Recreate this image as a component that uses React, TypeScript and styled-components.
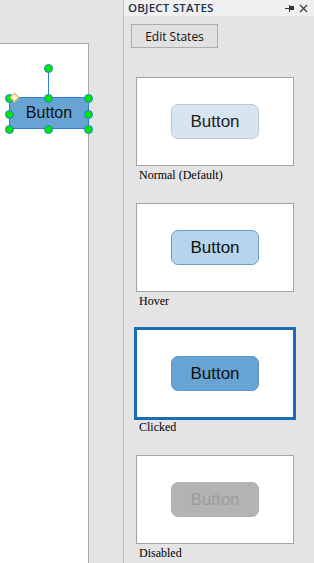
import React from "react";
import styled, { createGlobalStyle } from "styled-components";

const Global = createGlobalStyle`
  html, body { margin: 0; padding: 0; background: #e4e4e4; }
  body { width: 314px; height: 563px; overflow: hidden; font-family: "Liberation Sans", Arial, sans-serif; }
`;

const Root = styled.div`
  display: flex;
  width: 314px;
  height: 563px;
  background: #e4e4e4;
`;

const Workspace = styled.div`
  width: 124px;
  flex: none;
  padding-top: 43px;
  box-sizing: border-box;
  border-right: 1px solid #bdbdbd;
  display: flex;
`;

const Canvas = styled.div`
  position: relative;
  width: 89px;
  height: 100%;
  box-sizing: border-box;
  background: #fff;
  border-top: 1px solid #a9a9a9;
  border-right: 1px solid #a9a9a9;
`;

const Widget = styled.div`
  position: absolute;
  left: 9px;
  top: 53px;
  width: 80px;
  height: 32px;
  box-sizing: border-box;
  background: #67a4d4;
  border: 1px solid #2c80df;
  display: flex;
  align-items: center;
  justify-content: center;
  font-family: "Liberation Sans", Arial, sans-serif;
  font-size: 16px;
  color: #111;
`;

const RotateLine = styled.div`
  position: absolute;
  left: 48px;
  top: 24px;
  width: 1px;
  height: 30px;
  background: #2c80df;
`;

const Handle = styled.div<{ $x: number; $y: number }>`
  position: absolute;
  left: ${(p) => p.$x - 4.5}px;
  top: ${(p) => p.$y - 4.5}px;
  width: 9px;
  height: 9px;
  box-sizing: border-box;
  border-radius: 50%;
  background: #00e60a;
  border: 1px solid #2a7fd6;
`;

const Diamond = styled.div`
  position: absolute;
  left: 11px;
  top: 50px;
  width: 7px;
  height: 7px;
  box-sizing: border-box;
  background: #fff4cc;
  border: 1px solid #d0b46a;
  transform: rotate(45deg);
`;

const Panel = styled.div`
  flex: 1;
  display: flex;
  flex-direction: column;
  background: #e4e4e4;
`;

const Header = styled.div`
  height: 16px;
  background: #f0f0f0;
  display: flex;
  align-items: center;
  padding: 0 4px 0 4px;
  box-sizing: border-box;
`;

const Title = styled.div`
  flex: 1;
  font-family: "Open Sans", "Liberation Sans", sans-serif;
  font-weight: 600;
  font-size: 11.5px;
  letter-spacing: 0.2px;
  color: #1e2f4a;
  line-height: 16px;
`;

const HeaderIcons = styled.div`
  display: flex;
  align-items: center;
  gap: 4px;
  margin-right: 2px;
`;

const Toolbar = styled.div`
  padding: 8px 0 0 7px;
`;

const EditButton = styled.button`
  width: 87px;
  height: 24px;
  box-sizing: border-box;
  background: #e1e1e1;
  border: 1px solid #adadad;
  font-family: "Open Sans", "Liberation Sans", sans-serif;
  font-size: 12px;
  color: #111;
  padding: 0;
  display: flex;
  align-items: center;
  justify-content: center;
`;

const Separator = styled.div`
  margin: 11px 4px 0 6px;
  height: 1px;
  background: #a6a6a6;
  box-shadow: 0 1px 0 #f4f4f4;
`;

const StateList = styled.div`
  display: flex;
  flex-direction: column;
  padding: 18px 0 0 12px;
`;

const StateItem = styled.div`
  height: 126px;
  display: flex;
  flex-direction: column;
`;

const Card = styled.div<{ $selected?: boolean }>`
  width: 158px;
  height: 89px;
  box-sizing: border-box;
  background: #fff;
  border: 1px solid #a3a3a3;
  display: flex;
  align-items: center;
  justify-content: center;
  ${(p) =>
    p.$selected &&
    `
    outline: 3px solid #1a6db5;
    outline-offset: -1px;
    border-color: #1a6db5;
  `}
`;

type Variant = "normal" | "hover" | "clicked" | "disabled";

const variants: Record<Variant, { bg: string; border: string; color: string }> = {
  normal: { bg: "#d7e5f1", border: "#bcc8d2", color: "#222" },
  hover: { bg: "#b6d4eb", border: "#6f9fc7", color: "#111" },
  clicked: { bg: "#67a4d3", border: "#5f96c3", color: "#111" },
  disabled: { bg: "#b3b3b3", border: "#b3b3b3", color: "#9c9c9c" },
};

const StateButton = styled.div<{ $v: Variant }>`
  width: 88px;
  height: 35px;
  box-sizing: border-box;
  border-radius: 7px;
  background: ${(p) => variants[p.$v].bg};
  border: 1px solid ${(p) => variants[p.$v].border};
  color: ${(p) => variants[p.$v].color};
  font-family: "Liberation Sans", Arial, sans-serif;
  font-size: 17px;
  display: flex;
  align-items: center;
  justify-content: center;
`;

const Label = styled.div`
  font-family: "Liberation Serif", "Times New Roman", serif;
  font-size: 12px;
  color: #000;
  padding: 2px 0 0 3px;
  line-height: 14px;
`;

const states: { label: string; v: Variant }[] = [
  { label: "Normal (Default)", v: "normal" },
  { label: "Hover", v: "hover" },
  { label: "Clicked", v: "clicked" },
  { label: "Disabled", v: "disabled" },
];

const handles = [
  [9, 97], [48, 97], [88, 97],
  [9, 113], [88, 113],
  [9, 128], [48, 128], [88, 128],
];

export default function App() {
  return (
    <Root>
      <Global />
      <Workspace>
        <Canvas>
          <RotateLine />
          <Widget>Button</Widget>
          <Handle $x={48} $y={24} />
          {handles.map(([x, y], i) => (
            <Handle key={i} $x={x} $y={y - 43} />
          ))}
          <Diamond />
        </Canvas>
      </Workspace>
      <Panel>
        <Header>
          <Title>OBJECT STATES</Title>
          <HeaderIcons>
            <svg width="10" height="9" viewBox="0 0 10 9">
              <line x1="0" y1="4.5" x2="4" y2="4.5" stroke="#333" strokeWidth="1" />
              <rect x="4" y="2" width="5" height="4" fill="#333" />
              <line x1="4.5" y1="1" x2="4.5" y2="8" stroke="#333" strokeWidth="1" />
            </svg>
            <svg width="9" height="9" viewBox="0 0 9 9">
              <path d="M1 1 L8 8 M8 1 L1 8" stroke="#444" strokeWidth="1.4" />
            </svg>
          </HeaderIcons>
        </Header>
        <Toolbar>
          <EditButton>Edit States</EditButton>
        </Toolbar>
        <Separator />
        <StateList>
          {states.map((s) => (
            <StateItem key={s.label}>
              <Card $selected={s.v === "clicked"}>
                <StateButton $v={s.v}>Button</StateButton>
              </Card>
              <Label>{s.label}</Label>
            </StateItem>
          ))}
        </StateList>
      </Panel>
    </Root>
  );
}
